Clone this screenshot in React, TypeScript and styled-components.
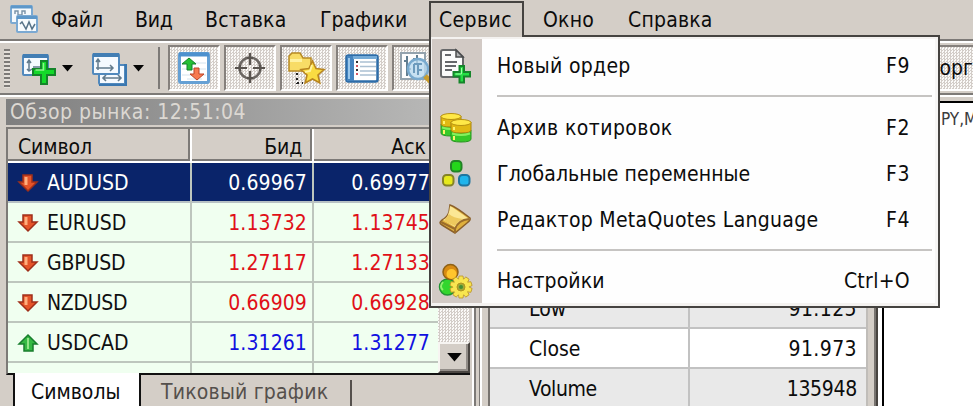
import React from 'react';
import styled, { createGlobalStyle, css } from 'styled-components';

const face = '#d4cec7';
const shade = '#7d7a77';

const GlobalStyle = createGlobalStyle`
  * { box-sizing: border-box; }
  body { margin: 0; overflow: hidden; }
`;

const checker = css`
  background: repeating-conic-gradient(#d3cdc8 0 25%, #fbfaf8 0 50%) 0 0 / 3px 3px;
`;

const Screen = styled.div`
  position: relative;
  width: 973px;
  height: 406px;
  overflow: hidden;
  display: flex;
  flex-direction: column;
  background: ${face};
  color: #0c0c0c;
  font: 21px "DejaVu Sans Condensed", "DejaVu Sans", sans-serif;
  white-space: nowrap;
  svg { display: block; flex: none; overflow: visible; }
`;

const Label = styled.span<{ $track?: number }>`
  letter-spacing: ${(p) => p.$track ?? 0}px;
`;

const MenuBar = styled.nav`
  height: 39px;
  flex: none;
  display: flex;
  padding-left: 10px;
`;

const AppIcon = styled.div`
  width: 41px;
  padding-top: 4px;
`;

const MenuTitle = styled.div<{ $w: number }>`
  width: ${(p) => p.$w}px;
  line-height: 41px;
`;

const Toolbar = styled.div`
  height: 58px;
  flex: none;
  display: flex;
  align-items: flex-start;
  border-top: 2px solid ${shade};
  border-bottom: 2px solid #fff;
  padding: 4px 0 0 4px;
  box-shadow: inset 0 2px #fff, inset 0 -2px ${shade};
  > * { flex: none; }
`;

const Grip = styled.div`
  width: 6px;
  height: 39px;
  margin: 4px 12px 0 0;
  background: repeating-linear-gradient(${shade} 0 2px, #e4dfd9 2px 4px);
`;

const DropButton = styled.div<{ $w: number }>`
  width: ${(p) => p.$w}px;
  height: 47px;
  display: flex;
  align-items: center;
  gap: 5px;
`;

const Divider = styled.div`
  width: 2px;
  height: 42px;
  margin: 2px 8px 0 0;
  background: ${shade};
`;

const Toggle = styled.div`
  width: 52px;
  height: 46px;
  margin-right: 4px;
  display: flex;
  align-items: center;
  justify-content: center;
  ${checker}
  border: 2px solid #85807c;
  border-right-color: #fff;
  border-bottom-color: #fff;
`;

const TradeToggle = styled(Toggle)`
  margin: 0 0 0 472px;
  width: 53px;
  justify-content: flex-end;
  border-right: 0;
`;

const Body = styled.div`
  flex: 1;
  min-height: 0;
  display: flex;
`;

const MarketPanel = styled.section`
  width: 473px;
  padding: 2px 2px 0 6px;
  flex: none;
  border-right: 1px solid #fff;
`;

const PanelTitle = styled.header`
  height: 26px;
  padding-left: 4px;
  line-height: 26px;
  color: #dcd8d2;
  background: linear-gradient(90deg, #7f7f7f, #bcbcbb);
`;

const List = styled.div`
  height: 248px;
  margin-top: 2px;
  display: flex;
  border-left: 2px solid ${shade};
  border-top: 2px solid ${shade};
  border-bottom: 2px solid #111;
`;

const Quotes = styled.div`
  width: 430px;
  overflow: hidden;
  background: #f0fff0;
`;

const QuoteRow = styled.div<{ $selected?: boolean }>`
  display: grid;
  grid-template-columns: 184px 122px 124px;
  height: 40px;
  line-height: 40px;
  color: ${(p) => (p.$selected ? '#fff' : '#101010')};
  background: ${(p) => (p.$selected ? '#0a246a' : '#f0fff0')};
  border-bottom: 2px solid ${(p) => (p.$selected ? '#b7c1c4' : '#bdc6bd')};
  > * { border-right: 2px solid #bdc6bd; }
  > :last-child { border-right: 0; }
`;

const HeadRow = styled.div`
  display: grid;
  grid-template-columns: 184px 122px 124px;
  height: 34px;
  line-height: 37px;
  background: ${face};
  border-bottom: 2px solid #fff;
  box-shadow: inset 0 -2px ${shade};
`;

const HeadCell = styled.div<{ $end?: boolean }>`
  height: 32px;
  text-align: ${(p) => (p.$end ? 'right' : 'left')};
  padding: 0 10px;
  border-right: 2px solid #fff;
  box-shadow: inset -2px 0 ${shade};
`;

const SymbolCell = styled.div`
  display: flex;
  align-items: center;
  gap: 8px;
  padding-left: 9px;
`;

const PriceCell = styled.div<{ $tone: string }>`
  text-align: right;
  padding-right: 5px;
  letter-spacing: 0.1px;
  color: ${(p) => p.$tone};
`;

const AskCell = styled(PriceCell)`
  padding-right: 8px;
`;

const ScrollTrack = styled.div`
  width: 32px;
  display: flex;
  align-items: flex-end;
  ${checker}
`;

const ScrollButton = styled.div`
  width: 32px;
  height: 31px;
  display: grid;
  place-items: center;
  background: ${face};
  border: 2px solid #f7f5f2;
  border-right-color: #4a4642;
  border-bottom-color: #4a4642;
  box-shadow: inset -2px -2px #928d88;
`;

const TabStrip = styled.div`
  height: 34px;
  display: flex;
  padding-left: 7px;
`;

const ActiveTab = styled.div`
  width: 128px;
  margin-top: -2px;
  padding: 2px 0 0 16px;
  line-height: 34px;
  background: #fff;
  border-left: 2px solid #111;
  border-right: 2px solid #111;
`;

const Tab = styled.div`
  width: 211px;
  height: 26px;
  margin-top: 5px;
  padding-left: 20px;
  line-height: 25px;
  color: #55504c;
  border-right: 2px solid #55504c;
`;

const Splitter = styled.div`
  width: 17px;
  flex: none;
  border-right: 2px solid #77736f;
  background: linear-gradient(90deg, #fff 0 1px, ${shade} 1px 3px, ${face} 3px 6px, ${shade} 6px 7px, #fff 7px 9px, ${face} 9px);
`;

const DataWindow = styled.section`
  width: 378px;
  flex: none;
  display: flex;
  flex-direction: column;
  justify-content: flex-end;
  border-right: 2px solid #c0bdb9;
`;

const DataRow = styled.div<{ $alt?: boolean; $h?: number }>`
  height: ${(p) => p.$h ?? 40}px;
  line-height: 41px;
  flex: none;
  display: grid;
  grid-template-columns: 200px 1fr;
  background: ${(p) => (p.$alt ? '#e9e9e9' : '#fff')};
  border-top: 2px solid #c2c2c2;
`;

const DataName = styled.div`
  padding-left: 39px;
  border-right: 2px solid #c2c2c2;
`;

const DataValue = styled.div`
  padding-right: 9px;
  text-align: right;
`;

const WindowEdge = styled.div`
  width: 14px;
  flex: none;
  background: linear-gradient(90deg, ${face} 0 6px, #77736f 6px 8px, #47433f 8px 10px, #fff 10px);
`;

const Chart = styled.section`
  flex: 1;
  margin-top: 4px;
  padding: 6px 0 0 57px;
  overflow: hidden;
  background: #fff;
  border-left: 2px solid #000;
  border-top: 2px solid #000;
  font-size: 17px;
  line-height: 20px;
  color: #3c3c3c;
`;

const OpenMenu = styled.div`
  position: absolute;
  left: 429px;
  top: 1px;
  width: 511px;
`;

const OpenTitle = styled.div`
  position: relative;
  z-index: 1;
  width: 95px;
  height: 36px;
  padding-left: 8px;
  line-height: 35px;
  background: ${face};
  border: 2px solid #454340;
  border-bottom: 0;
`;

const Popup = styled.div`
  height: 273px;
  margin-top: -2px;
  padding: 5px 0;
  border: 2px solid #454340;
  background: linear-gradient(90deg, #d2cac5 51px, #fefefe 51px);
  box-shadow: inset 1px 0 #f4f2f0, inset 0 2px #f4f2f0, inset -3px 0 #f7f6f5, inset 0 -3px #f4f2f0;
`;

const MenuItem = styled.div`
  height: 46px;
  line-height: 46px;
  display: flex;
  align-items: center;
  padding: 1px 28px 0 7px;
`;

const ItemIcon = styled.div`
  width: 59px;
`;

const Shortcut = styled(Label)`
  margin-left: auto;
`;

const Separator = styled.div<{ $h: number }>`
  height: ${(p) => p.$h}px;
  display: flex;
  align-items: center;
  margin: 0 6px 0 66px;
  &::after {
    content: '';
    flex: 1;
    height: 2px;
    background: #c6c4c2;
  }
`;

const Caret = ({ w = 11 }: { w?: number }) => (
  <svg width={w} height={w / 2 + 1} viewBox="0 0 12 7"><path d="M0 0h12L6 7z" fill="#050505" /></svg>
);

const LogoIcon = () => (
  <svg width="29" height="30" viewBox="0 0 29 30">
    <rect x="1" y="2" width="21" height="17" rx="1" fill="#f4f9fd" stroke="#7ba9d2" strokeWidth="2" />
    <path d="M1 3h21" stroke="#5d97c9" strokeWidth="3" />
    <path d="M5 10V7h3v4h4V7h3v3" fill="none" stroke="#7892a8" strokeWidth="1.4" />
    <rect x="7" y="12" width="20" height="16" rx="1" fill="#f7fbfe" stroke="#7ba9d2" strokeWidth="2" />
    <path d="M7 13.500h20" stroke="#5d97c9" strokeWidth="3" />
    <path d="M10 20l2-2 4 7 3-7 3 7 3-5" fill="none" stroke="#567389" strokeWidth="1.5" />
  </svg>
);

const plusPath = 'M11 0h6v8h8v6h-8v9h-6v-9H3V8h8z';

const NewChartIcon = () => (
  <svg width="35" height="32" viewBox="0 0 35 32">
    <rect x="1" y="2" width="25" height="20" rx="1" fill="#f5faff" stroke="#5189bd" strokeWidth="2" />
    <path d="M1 3h25" stroke="#427eb4" strokeWidth="4" />
    <path d="M7 8v10M5 10l2-3 2 3M5 16l2 2 3-2M11 14h7" fill="none" stroke="#627b8d" strokeWidth="1.5" />
    <path transform="translate(8 8)" d={plusPath} fill="#14d92a" stroke="#14852a" strokeWidth="2" />
    <path d="M21.500 10v7h-8" fill="none" stroke="#8cf58b" strokeWidth="1.500" />
  </svg>
);

const WindowsIcon = () => (
  <svg width="36" height="34" viewBox="0 0 36 34">
    <rect x="7" y="13" width="26" height="19" rx="1" fill="#f5faff" stroke="#5189bd" strokeWidth="2" />
    <path d="M32 13h2v20H7" fill="none" stroke="#3977b0" strokeWidth="2" />
    <path d="M11 26h18M14 23l-3 3 3 3M26 23l3 3-3 3" fill="none" stroke="#627b8d" strokeWidth="1.600" />
    <rect x="1" y="2" width="26" height="20" rx="1" fill="#f5faff" stroke="#5189bd" strokeWidth="2" />
    <path d="M1 3h26" stroke="#427eb4" strokeWidth="4" />
    <path d="M6 7v11M4 10l2-3 2 3M4 16h17M18 13l3 3-3 3" fill="none" stroke="#627b8d" strokeWidth="1.500" />
  </svg>
);

const MarketIcon = () => (
  <svg width="32" height="32" viewBox="0 0 32 32">
    <rect x="1.500" y="1.500" width="29" height="29" rx="1.500" fill="#fff" stroke="#65a0d4" strokeWidth="3" />
    <path d="M1 2.500h30" stroke="#4d91ce" strokeWidth="4" />
    <path d="M4 11h24M4 17h24M4 23h24M9 27h15" stroke="#d4e3ee" />
    <path d="M11 6l7 6h-4v6H9v-6H4z" fill="#25bf34" stroke="#15802a" />
    <path d="M16 16h5v6h5l-7 6-7-6h4z" fill="#f77a50" stroke="#bd4427" />
  </svg>
);

const CrossIcon = () => (
  <svg width="32" height="32" viewBox="0 0 32 32">
    <circle cx="16" cy="16" r="10.500" fill="none" stroke="#6c6763" strokeWidth="2.500" />
    <path d="M16 1v12M16 19v12M1 16h12M19 16h12M13 6h6M13 26h6M6 13v6M26 13v6" stroke="#59544f" strokeWidth="2.200" />
  </svg>
);

const FolderIcon = () => (
  <svg width="38" height="34" viewBox="0 0 38 34">
    <path d="M2 20V5l3-3h8l3 5h8v13H2z" fill="#f8dc66" stroke="#b88b24" strokeWidth="1.500" />
    <path d="M3 8h12v3H3z" fill="#fff2a1" />
    <path d="M10 22v11M10 32h6" stroke="#222" strokeWidth="2" strokeDasharray="2 3" />
    <path d="M25.500 10l3.500 7.500 8 1-6 5.500 1.800 8-7.300-4-7.300 4 1.800-8-6-5.500 8-1z" fill="#fadc42" stroke="#b88520" strokeWidth="1.600" />
    <path d="M25 14l-2 6-5 1" fill="none" stroke="#fff4a0" strokeWidth="2" />
  </svg>
);

const DataIcon = () => (
  <svg width="34" height="29" viewBox="0 0 34 29">
    <rect x="1.500" y="1.500" width="31" height="26" rx="2" fill="#fff" stroke="#2e6da9" strokeWidth="2.500" />
    <path d="M2 2h7v25H2z" fill="#4584bf" /><path d="M3 4h2v21H3z" fill="#9bc8ec" /><path d="M8 2h24v3H8z" fill="#75abd7" />
    <path d="M15 8h16M15 12.500h16M15 17h16M15 21h16" stroke="#abc0d2" strokeWidth="1.500" />
    <path d="M11 7h2v2h-2zM11 15h2v2h-2z" fill="#333" /><path d="M11 11h2v2h-2zM11 19h2v2h-2z" fill="#d45662" />
  </svg>
);

const TesterIcon = () => (
  <svg width="36" height="34" viewBox="0 0 36 34">
    <path d="M1 2h24v26H1z" fill="#fdfdfd" stroke="#94a3ae" strokeWidth="2" />
    <path d="M7 5v20M4 10h4M17 4v9M13 8h8M7 18h4" stroke="#617d90" strokeWidth="2" />
    <circle cx="18" cy="18" r="10" fill="#b9d9efcc" stroke="#79aace" strokeWidth="2.500" />
    <path d="M14 22v-9M18 24V14M14 13h8M18 19h4" stroke="#6d9bbd" strokeWidth="2" />
    <path d="M25 25l7 7" stroke="#c99d2c" strokeWidth="5" />
  </svg>
);

const OrderIcon = () => (
  <svg width="33" height="36" viewBox="0 0 33 36">
    <path d="M5 2h13l7 7v18q0 2-2 2H5q-2 0-2-2V4q0-2 2-2z" fill="#fbfbfb" stroke="#67686a" strokeWidth="2" />
    <path d="M18 2v7h7z" fill="#b2b4b5" stroke="#4b4c4e" strokeWidth="1.500" />
    <path d="M7 7h6M7 14h12M7 18h11M7 22h7" stroke="#65676b" strokeWidth="1.800" />
    <path d="M21.500 18h4.500v6h6v4.500h-6v6h-4.500v-6h-6V24h6z" fill="#25df45" stroke="#16852b" strokeWidth="2" />
    <path d="M23.500 20v6h-6" fill="none" stroke="#9bffa3" />
  </svg>
);

const Cylinder = ({ x, y }: { x: number; y: number }) => (
  <g transform={`translate(${x} ${y})`}>
    <path d="M0 11v9q0 3 10 3t10-3v-9z" fill="#37c928" stroke="#27951f" />
    <path d="M0 3v8q0 3 10 3t10-3V3z" fill="#e1b913" stroke="#a9820e" />
    <ellipse cx="10" cy="3.500" rx="10" ry="3" fill="#ffe847" stroke="#b89311" />
    <path d="M3 8v3M3 17v4" stroke="#fff36c" strokeWidth="2" />
    <path d="M1 14.500q9 3 18 0" stroke="#85f05e" strokeWidth="2" fill="none" />
  </g>
);

const ArchiveIcon = () => (
  <svg width="33" height="34" viewBox="0 0 33 34"><Cylinder x={3} y={2} /><Cylinder x={13} y={8} /></svg>
);

const GlobalsIcon = () => (
  <svg width="33" height="30" viewBox="0 0 33 30">
    <rect x="13" y="2" width="10.500" height="10.500" rx="3.500" fill="#24d61b" stroke="#228226" strokeWidth="2" />
    <rect x="5" y="16" width="10.500" height="10.500" rx="3.500" fill="#e6e91d" stroke="#858327" strokeWidth="2" />
    <rect x="21" y="16" width="10.500" height="10.500" rx="3.500" fill="#20b5ec" stroke="#20759f" strokeWidth="2" />
  </svg>
);

const EditorIcon = () => (
  <svg width="33" height="32" viewBox="0 0 33 32">
    <g transform="translate(1 0)">
      <path d="M11 1q6 2 20 13 1 2-3 5L16 29 3 21q-4-2 0-5 5-2 7-8z" fill="#dfb03d" stroke="#8b602a" strokeWidth="1.500" />
      <path d="M11 2q4 2 19 13-9 1-14 8L4 16q6-2 7-14z" fill="#fbe795" />
      <path d="M10 10q4 4 14 5-5 2-8 7L5 17z" fill="#edc95d" />
      <path d="M2 18l14 7q3-9 14-10M16 25v4" fill="none" stroke="#9b6d2c" strokeWidth="2" />
    </g>
  </svg>
);

const teeth = Array.from({ length: 10 }, (_, i) => i * 36);

const OptionsIcon = () => (
  <svg width="35" height="36" viewBox="0 0 35 36">
    <ellipse cx="9.500" cy="24" rx="8" ry="8" fill="#32d62d" stroke="#219432" strokeWidth="1.500" />
    <path d="M5 19q-4 5 0 8" stroke="#91f06e" strokeWidth="2" fill="none" />
    <circle cx="12.500" cy="9" r="7.500" fill="#d88b12" stroke="#8f6115" strokeWidth="1.500" />
    <circle cx="13.500" cy="11" r="5" fill="#ffc52d" />
    {teeth.map((a) => <path key={a} transform={`rotate(${a} 23 24)`} d="M21 13h4l1 6h-6z" fill="#f9e54f" stroke="#bc9626" strokeWidth=".8" />)}
    <circle cx="23" cy="24" r="8" fill="#f8e650" />
    <circle cx="23" cy="24" r="4" fill="#9daa38" stroke="#b29420" />
    <circle cx="23" cy="24" r="2" fill="#448e35" />
  </svg>
);

const ArrowIcon = ({ up }: { up?: boolean }) => (
  <svg width="22" height="20" viewBox="0 0 22 20">
    {up ? (
      <><path d="M11 2l9 9h-4v7H7v-7H2z" fill="#35b943" stroke="#187e2d" strokeWidth="1.500" /><path d="M11 5v11" stroke="#91e486" strokeWidth="2" /></>
    ) : (
      <><path d="M6 2h9v7h5l-9 9-9-9h4z" fill="#e45429" stroke="#9f2f1a" strokeWidth="1.500" /><path d="M9 4v8" stroke="#ffad7c" strokeWidth="3" /></>
    )}
  </svg>
);

const quotes = [
  { symbol: 'AUDUSD', bid: '0.69967', ask: '0.69977', tone: '#fff', selected: true, up: false, track: -0.05 },
  { symbol: 'EURUSD', bid: '1.13732', ask: '1.13745', tone: '#e01018', selected: false, up: false, track: 0 },
  { symbol: 'GBPUSD', bid: '1.27117', ask: '1.27133', tone: '#e01018', selected: false, up: false, track: -0.15 },
  { symbol: 'NZDUSD', bid: '0.66909', ask: '0.66928', tone: '#e01018', selected: false, up: false, track: -0.3 },
  { symbol: 'USDCAD', bid: '1.31261', ask: '1.31277', tone: '#1010e0', selected: false, up: true, track: 0.1 },
];

const titlesBefore: [string, number, number][] = [['Файл', 84, -0.06], ['Вид', 70, -0.2], ['Вставка', 115, 0.2], ['Графики', 223, 0]];
const titlesAfter: [string, number, number][] = [['Окно', 85, 0.18], ['Справка', 100, 0.2]];

export default function App() {
  return (
    <Screen>
      <GlobalStyle />
      <MenuBar>
        <AppIcon><LogoIcon /></AppIcon>
        {[...titlesBefore, ...titlesAfter].map(([t, w, track]) => <MenuTitle key={t} $w={w}><Label $track={track}>{t}</Label></MenuTitle>)}
      </MenuBar>
      <Toolbar>
        <Grip />
        <DropButton $w={70}><NewChartIcon /><Caret /></DropButton>
        <DropButton $w={66}><WindowsIcon /><Caret /></DropButton>
        <Divider />
        <Toggle><MarketIcon /></Toggle>
        <Toggle><CrossIcon /></Toggle>
        <Toggle><FolderIcon /></Toggle>
        <Toggle><DataIcon /></Toggle>
        <Toggle><TesterIcon /></Toggle>
        <TradeToggle><Label>торг</Label></TradeToggle>
      </Toolbar>
      <Body>
        <MarketPanel>
          <PanelTitle><Label $track={0.5}>Обзор рынка: 12:51:04</Label></PanelTitle>
          <List>
            <Quotes>
              <HeadRow>
                <HeadCell><Label $track={-0.1}>Символ</Label></HeadCell>
                <HeadCell $end><Label $track={-0.2}>Бид</Label></HeadCell>
                <HeadCell $end><Label>Аск</Label></HeadCell>
              </HeadRow>
              {quotes.map((q) => (
                <QuoteRow key={q.symbol} $selected={q.selected}>
                  <SymbolCell><ArrowIcon up={q.up} /><Label $track={q.track}>{q.symbol}</Label></SymbolCell>
                  <PriceCell $tone={q.tone}>{q.bid}</PriceCell>
                  <AskCell $tone={q.tone}>{q.ask}</AskCell>
                </QuoteRow>
              ))}
              <QuoteRow><div /><div /><div /></QuoteRow>
            </Quotes>
            <ScrollTrack><ScrollButton><Caret w={15} /></ScrollButton></ScrollTrack>
          </List>
          <TabStrip>
            <ActiveTab><Label>Символы</Label></ActiveTab>
            <Tab><Label $track={0.2}>Тиковый график</Label></Tab>
          </TabStrip>
        </MarketPanel>
        <Splitter />
        <DataWindow>
          <DataRow $alt><DataName>Low</DataName><DataValue><Label $track={0.4}>91.125</Label></DataValue></DataRow>
          <DataRow><DataName><Label $track={0}>Close</Label></DataName><DataValue><Label $track={0.4}>91.973</Label></DataValue></DataRow>
          <DataRow $alt $h={39}><DataName><Label $track={-0.4}>Volume</Label></DataName><DataValue><Label $track={-0.3}>135948</Label></DataValue></DataRow>
        </DataWindow>
        <WindowEdge />
        <Chart>PY,M</Chart>
      </Body>
      <OpenMenu>
        <OpenTitle><Label $track={0.4}>Сервис</Label></OpenTitle>
        <Popup>
          <MenuItem><ItemIcon><OrderIcon /></ItemIcon><Label $track={0.3}>Новый ордер</Label><Shortcut $track={0.5}>F9</Shortcut></MenuItem>
          <Separator $h={16} />
          <MenuItem><ItemIcon><ArchiveIcon /></ItemIcon><Label $track={0.42}>Архив котировок</Label><Shortcut $track={0.5}>F2</Shortcut></MenuItem>
          <MenuItem><ItemIcon><GlobalsIcon /></ItemIcon><Label $track={0.1}>Глобальные переменные</Label><Shortcut $track={0.5}>F3</Shortcut></MenuItem>
          <MenuItem><ItemIcon><EditorIcon /></ItemIcon><Label $track={0.3}>Редактор MetaQuotes Language</Label><Shortcut $track={0.5}>F4</Shortcut></MenuItem>
          <Separator $h={15} />
          <MenuItem><ItemIcon><OptionsIcon /></ItemIcon><Label $track={0.1}>Настройки</Label><Shortcut $track={0.3}>Ctrl+O</Shortcut></MenuItem>
        </Popup>
      </OpenMenu>
    </Screen>
  );
}
